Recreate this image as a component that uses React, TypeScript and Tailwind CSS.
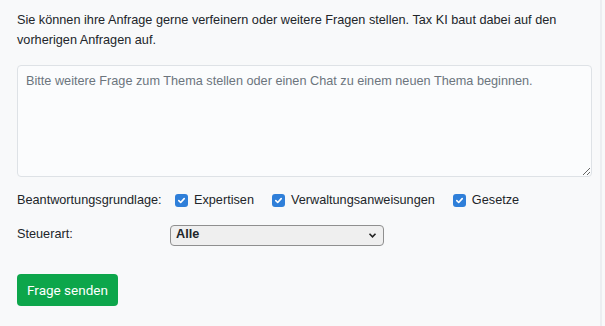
import { useState } from "react"

const options = [
  { id: "expertisen", label: "Expertisen" },
  { id: "verwaltung", label: "Verwaltungsanweisungen" },
  { id: "gesetze", label: "Gesetze" },
]

function CheckBox({ label }: { label: string }) {
  return (
    <label className="flex items-center gap-[6px]">
      <span className="flex h-[13px] w-[13px] items-center justify-center rounded-[3px] bg-[#2f7fd9]">
        <svg width="9" height="9" viewBox="0 0 10 10" fill="none">
          <path d="M2 5.2 L4.1 7.2 L8 2.9" stroke="white" strokeWidth="1.8" strokeLinecap="round" strokeLinejoin="round" />
        </svg>
      </span>
      <span>{label}</span>
    </label>
  )
}

export default function App() {
  const [question, setQuestion] = useState("")

  return (
    <div className="flex h-[326px] w-[605px] bg-[#f8f9fa] font-['Liberation_Sans',Arial,sans-serif] text-[12.7px] text-[#212529]">
      <div className="w-[602px] border-r-2 border-[#eceef1] pl-[17px] pr-[12px] pt-[10px]">
        <p className="leading-[20px]">
          Sie können ihre Anfrage gerne verfeinern oder weitere Fragen stellen. Tax KI baut dabei auf den vorherigen Anfragen auf.
        </p>

        <textarea
          value={question}
          onChange={(e) => setQuestion(e.target.value)}
          placeholder="Bitte weitere Frage zum Thema stellen oder einen Chat zu einem neuen Thema beginnen."
          className="mt-[15px] block h-[112px] w-[575px] resize-y rounded-[4px] border border-[#dee2e6] bg-[#fbfcfd] px-[8px] py-[6px] text-[12.7px] leading-[18px] placeholder:text-[#6c757d] focus:outline-none"
        />

        <div className="mt-[14px] flex h-[20px] items-center">
          <span className="w-[158px]">Beantwortungsgrundlage:</span>
          <div className="flex items-center gap-[18px]">
            {options.map((o) => (
              <CheckBox key={o.id} label={o.label} />
            ))}
          </div>
        </div>

        <div className="mt-[14px] flex h-[20px] items-center">
          <span className="w-[153px]">Steuerart:</span>
          <div className="relative flex h-[21px] w-[214px] items-center rounded-[4px] border border-[#8f8f8f] bg-[#efefef] px-[5px] font-bold">
            Alle
            <svg className="absolute right-[6px] top-[6px]" width="9" height="7" viewBox="0 0 9 7" fill="none">
              <path d="M1.5 1.8 L4.5 4.8 L7.5 1.8" stroke="#222" strokeWidth="1.6" />
            </svg>
          </div>
        </div>

        <button className="mt-[29px] h-[32px] w-[101px] rounded-[4px] bg-[#0da64b] font-['Roboto',sans-serif] text-[13.5px] text-white">
          Frage senden
        </button>
      </div>
    </div>
  )
}
